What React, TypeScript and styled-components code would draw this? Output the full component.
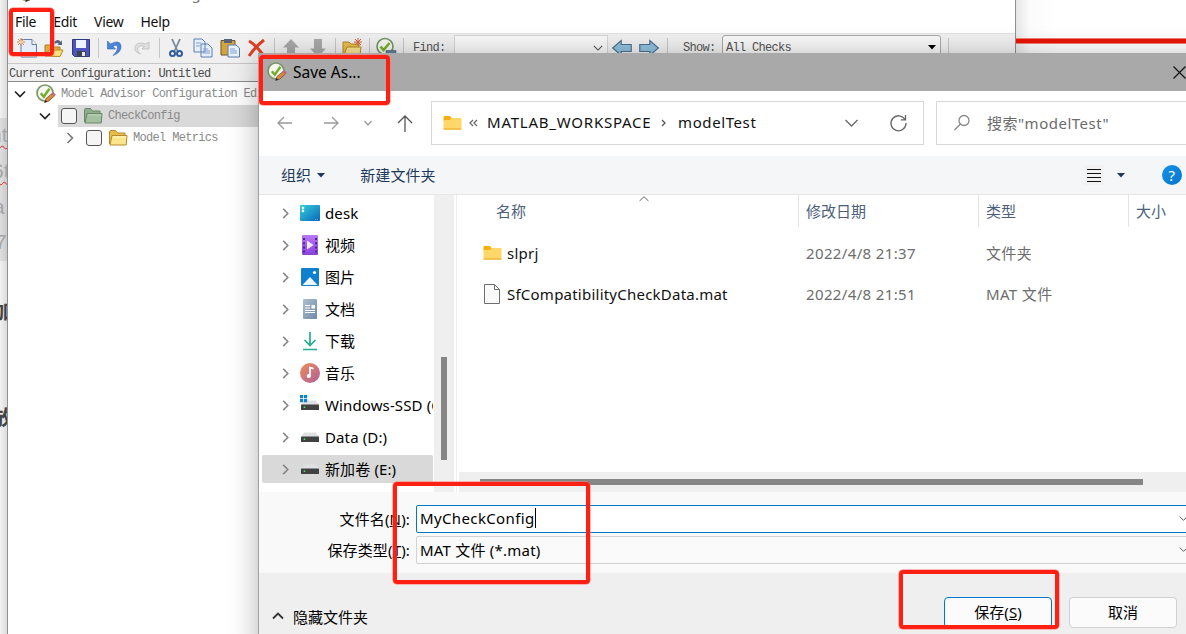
import React from 'react'
import { createGlobalStyle, styled } from 'styled-components'

const GlobalStyle = createGlobalStyle`
    * {
        box-sizing: border-box;
    }

    body {
        margin: 0;
        overflow: hidden;
        font-family: "Noto Sans", "Noto Sans CJK SC", sans-serif;
        font-size: 15px;
        color: #111;
    }
`

const Desktop = styled.div`
    position: relative;
    width: 1186px;
    height: 634px;
    overflow: hidden;
    background: #fff;
`

/**
 * Page behind the windows
 */

const BackPage = styled.div`
    position: absolute;
    left: 0;
    top: 0;
    width: 7px;
    height: 634px;
    overflow: hidden;
    background: linear-gradient(90deg, #f1f1f1, #dcdcdc);
`

const BackCode = styled.div`
    position: absolute;
    top: 118px;
    left: 0;
    width: 7px;
    height: 143px;
    background: linear-gradient(90deg, #dedede, #cbcbcb);
`

const BackText = styled.span<{ $top: number; $left: number; $bold?: boolean; $wavy?: boolean }>`
    position: absolute;
    top: ${props => props.$top}px;
    left: ${props => props.$left}px;
    line-height: 24px;
    white-space: nowrap;
    font-size: ${props => (props.$bold ? 20 : 21)}px;
    font-weight: ${props => (props.$bold ? 700 : 400)};
    font-family: "Liberation Sans", "Noto Sans CJK SC", sans-serif;
    color: ${props => (props.$bold ? '#444' : '#a5a5a8')};
    text-decoration: ${props => (props.$wavy ? 'underline wavy #e02020 1px' : 'none')};
    text-underline-offset: 3px;
`

const RightPage = styled.div`
    position: absolute;
    left: 1016px;
    top: 0;
    width: 170px;
    height: 60px;
    background: linear-gradient(90deg, #e6e6e6, #fbfbfb 14px, #fff 40px);
`

const RedRule = styled.div`
    margin-top: 38px;
    height: 6px;
    border: solid #f08072;
    border-width: 1px 0;
    background: #e81400;
`

/**
 * Configuration editor window
 */

const EditorWindow = styled.div`
    position: absolute;
    left: 7px;
    top: -18px;
    width: 1009px;
    height: 670px;
    display: flex;
    flex-direction: column;
    background: #fff;
    border: solid #8f9093;
    border-width: 0 1px;
`

const EditorTitle = styled.div`
    display: flex;
    align-items: center;
    gap: 8px;
    height: 29px;
    padding: 0 0 7px 9px;
    color: #777;
    line-height: 22px;
    letter-spacing: 0.25px;
`

const MenuBar = styled.div`
    display: flex;
    gap: 17px;
    height: 22px;
    padding-left: 7px;
    line-height: 22px;
    font-size: 14px;
    letter-spacing: -0.3px;
`

const Toolbar = styled.div`
    display: flex;
    align-items: center;
    gap: 7px;
    height: 30px;
    padding: 0 0 2px 9px;
    background: #f0f0f0;
    border-top: 1px solid #e2e2e2;
    font-family: "Liberation Mono", monospace;
    font-size: 12px;
    letter-spacing: -0.7px;
    color: #555;
`

const ToolIcon = styled.svg`
    flex: none;
    width: 20px;
    height: 20px;
    overflow: visible;
`

const ToolDivider = styled.div`
    width: 1px;
    height: 20px;
    margin: 0 -0.5px;
    background: #c6c6c6;
`

const ToolField = styled.div<{ $width: number; $round?: boolean }>`
    display: flex;
    align-items: center;
    justify-content: space-between;
    width: ${props => props.$width}px;
    height: 25px;
    padding: 0 4px 0 3px;
    border: 1px solid ${props => (props.$round ? '#aaa' : '#d5d5d5')};
    border-radius: ${props => (props.$round ? 3 : 0)}px;
    background: #f8f8f8;
`

const ToolLabel = styled.span<{ $width: number; $left?: number }>`
    width: ${props => props.$width}px;
    margin-left: ${props => props.$left || 0}px;
`

const Arrows = styled.div`
    display: flex;
    gap: 7px;
    margin: 0 1px 0 -3px;
`

const ConfigLine = styled.div`
    height: 19px;
    padding-left: 1px;
    line-height: 20px;
    background: #f0f0f0;
    border-top: 1px solid #c8c8c8;
    border-bottom: 1px solid #8c8c8c;
    font-family: "Liberation Mono", monospace;
    font-size: 12px;
    letter-spacing: -0.7px;
    color: #4a4a4a;
`

const ConfigTree = styled.div`
    display: flex;
    flex-direction: column;
    padding-top: 1px;
    font-family: "Liberation Mono", monospace;
    font-size: 12px;
    letter-spacing: -0.68px;
    color: #8a8a8a;
    white-space: nowrap;
`

const ConfigRow = styled.div<{ $depth: number }>`
    display: flex;
    align-items: center;
    height: 22px;
    padding-left: ${props => 6 + props.$depth * 25}px;
`

const ConfigItem = styled.div<{ $selected?: boolean }>`
    display: flex;
    align-items: center;
    gap: 5px;
    flex: 1;
    height: 22px;
    margin-left: 7px;
    padding-left: 3px;
    background: ${props => (props.$selected ? '#d9d9d9' : 'none')};
`

const CheckBox = styled.div`
    width: 16px;
    height: 16px;
    margin-right: 1px;
    border: 1px solid #555;
    border-radius: 3px;
    background: #f5f5f5;
`

/**
 * Save dialog
 */

const Dialog = styled.div`
    position: absolute;
    left: 259px;
    top: 53px;
    width: 960px;
    height: 600px;
    display: flex;
    flex-direction: column;
    background: #fff;
    box-shadow: -1px 0 0 #a2a2a2, 0 5px 28px rgba(0, 0, 0, 0.32);
`

const DialogTitle = styled.div`
    display: flex;
    align-items: center;
    flex: none;
    gap: 6px;
    height: 38px;
    padding: 0 33px 0 8px;
    background: #a9a9a9;
    color: #000;
    font-size: 15.5px;

    & > :last-child {
        margin-left: auto;
    }
`

const NavBar = styled.div`
    display: flex;
    align-items: center;
    flex: none;
    height: 65px;
    padding: 0 0 1px 18px;
`

const NavGlyph = styled.svg<{ $gap?: number }>`
    flex: none;
    margin-right: ${props => props.$gap || 0}px;
    overflow: visible;
    fill: none;
    stroke: #999;
    stroke-width: 1.3;
`

const AddressBox = styled.div`
    display: flex;
    align-items: center;
    width: 493px;
    height: 44px;
    padding: 0 0 1px 11px;
    border: 1px solid #d8d8d8;
`

const Crumb = styled.span<{ $width: number; $spacing: number }>`
    width: ${props => props.$width}px;
    padding-bottom: 2px;
    white-space: nowrap;
    letter-spacing: ${props => props.$spacing}px;
`

const SearchBox = styled.div`
    display: flex;
    align-items: center;
    gap: 17px;
    width: 270px;
    height: 44px;
    margin-left: 12px;
    padding: 0 0 1px 17px;
    border: 1px solid #d8d8d8;
    color: #6c6c6c;
    letter-spacing: 0.5px;
`

const CommandBar = styled.div`
    display: flex;
    align-items: center;
    flex: none;
    height: 39px;
    padding-left: 22px;
    background: #f4f6f8;
    border-bottom: 1px solid #e6e6e6;
    color: #1e395b;
`

const CommandButton = styled.div<{ $gap: number }>`
    display: flex;
    align-items: center;
    gap: 6px;
    margin-right: ${props => props.$gap}px;
    line-height: 22px;
    letter-spacing: 0.1px;
`

const ViewButton = styled.div`
    display: grid;
    place-items: center;
    width: 20px;
    height: 20px;
    margin-right: 13px;
    background: #f2f2f2;
`

const HelpBadge = styled.div`
    display: grid;
    place-items: center;
    width: 20px;
    height: 20px;
    margin-left: 37px;
    border-radius: 50%;
    background: linear-gradient(135deg, #1792e5, #0575cf);
    color: #fff;
    font-size: 15px;
    line-height: 20px;
`

const Browser = styled.div`
    display: flex;
    flex: none;
    height: 297px;
`

const PlaceList = styled.div`
    display: flex;
    flex-direction: column;
    gap: 4px;
    width: 175px;
    padding: 4px 1px 0 3px;
    overflow: hidden;
`

const PlaceRow = styled.div<{ $selected?: boolean }>`
    display: flex;
    align-items: center;
    flex: none;
    height: 28px;
    padding-left: 18px;
    overflow: hidden;
    white-space: nowrap;
    border-radius: 2px;
    background: ${props => (props.$selected ? '#d9d9d9' : 'none')};
    color: #000;
    font-size: 15px;
    letter-spacing: 0.12px;
`

const PlaceName = styled.span`
    padding-bottom: 1px;
    line-height: 26px;
`

const PlaceIcon = styled.svg`
    flex: none;
    width: 20px;
    height: 20px;
    margin: 0 5px 0 9px;
`

const VerticalTrack = styled.div`
    width: 20px;
    padding: 162px 0 0 7px;
    background: #efefef;
`

const VerticalThumb = styled.div`
    width: 6px;
    height: 103px;
    background: #868686;
`

const FilePane = styled.div`
    display: flex;
    flex-direction: column;
    flex: 1;
    margin-left: 2px;
    border-left: 1px solid #eee;
`

const HeaderRow = styled.div`
    display: grid;
    position: relative;
    grid-template-columns: 342px 180px 150px 1fr;
    height: 32px;
    color: #4c607a;
`

const HeaderCell = styled.div<{ $pad?: number }>`
    padding-left: ${props => props.$pad || 7}px;
    line-height: 32px;
    border-right: 1px solid #e3e3e3;
`

const SortMark = styled.svg`
    position: absolute;
    left: 182px;
    top: 1px;
    fill: none;
    stroke: #666;
`

const FileRow = styled.div`
    display: grid;
    grid-template-columns: 342px 180px 150px 1fr;
    align-items: center;
    height: 41px;
    color: #6d6d6d;
    white-space: nowrap;
    letter-spacing: 0.36px;

    & > span {
        padding-left: 7px;
    }
`

const FileName = styled.div`
    display: flex;
    align-items: center;
    gap: 5px;
    padding-left: 26px;
    color: #111;
    letter-spacing: 0.23px;
`

const FileRows = styled.div`
    flex: 1;
    padding-top: 5px;
`

const HorizontalTrack = styled.div`
    height: 20px;
    margin-left: 2px;
    padding: 7px 0 0 21px;
    background: #efefef;
`

const HorizontalThumb = styled.div`
    width: 663px;
    height: 6px;
    background: #868686;
`

const FormArea = styled.div`
    display: flex;
    flex-direction: column;
    flex: none;
    gap: 3px;
    height: 81px;
    padding-top: 13px;
    background: #f9f9f9;
`

const FormRow = styled.div`
    display: flex;
    align-items: center;
    gap: 6px;
    height: 28px;
    color: #000;
`

const FormLabel = styled.label`
    width: 151px;
    padding-bottom: 1px;
    text-align: right;
    white-space: nowrap;
    letter-spacing: 0.15px;
`

const FormField = styled.div<{ $active?: boolean }>`
    display: flex;
    align-items: center;
    width: 776px;
    height: 28px;
    padding: 0 0 2px 3px;
    border: 1px solid ${props => (props.$active ? '#0078c8' : '#d2d2d2')};
    border-radius: 2px;
    background: ${props => (props.$active ? '#fff' : '#fafafa')};
    letter-spacing: ${props => (props.$active ? 0.37 : 0.22)}px;

    & > svg {
        margin-left: auto;
        margin-right: 3px;
    }
`

const Caret = styled.i`
    width: 1px;
    height: 20px;
    background: #000;
`

const Footer = styled.div`
    display: flex;
    flex: 1;
    padding: 24px 42px 0 13px;
    background: #efefef;
    color: #000;
`

const HideFolders = styled.div`
    display: flex;
    align-items: center;
    gap: 9px;
    height: 38px;
    margin-right: auto;
`

const DialogButton = styled.div<{ $primary?: boolean }>`
    width: 108px;
    height: 31px;
    margin-left: ${props => (props.$primary ? 0 : 17)}px;
    line-height: 28px;
    text-align: center;
    border: 1px solid ${props => (props.$primary ? '#0078c8' : '#d0d0d0')};
    border-radius: 4px;
    background: #fbfbfb;
`

const Highlight = styled.div<{ $x: number; $y: number; $w: number; $h: number }>`
    position: absolute;
    left: ${props => props.$x}px;
    top: ${props => props.$y}px;
    width: ${props => props.$w}px;
    height: ${props => props.$h}px;
    border: 4px solid #ff2014;
    border-radius: 4px;
    box-shadow: 0 0 0 0.5px #ff7a72;
`

const AdvisorIcon = () => (
  <ToolIcon viewBox="0 0 20 20">
    <circle cx="9" cy="9" r="8" fill="#f4f8ee" stroke="#7d9468" strokeWidth="1.7" />
    <path d="M4.8 9.2l3 3.6 5.6-8" fill="none" stroke="#76ac2e" strokeWidth="2.4" />
    <path d="M8.5 18.5l1.5-4 6-5 2.5 2.5-6 5.2z" fill="#d98a42" stroke="#704b2c" strokeWidth=".7" />
    <path d="M16 9.5l1.5-1.2 2.4 2.4-1.4 1.4z" fill="#ce6182" />
    <path d="M8.5 18.5l1-2.5 1.8 1.7z" fill="#222" />
  </ToolIcon>
)

const OpenFolder = ({ green }: { green?: boolean }) => (
  <ToolIcon viewBox="0 0 20 20">
    <path d="M1.5 16V4q0-1.5 1.5-1.5h4.5L9.5 5H17v3" fill={green ? '#8fae87' : '#e8bd4c'} stroke={green ? '#68876b' : '#b88a28'} />
    <path d="M2 17L4 7.5h15L18.2 17z" fill={green ? '#a3c1a0' : '#fbe48d'} stroke={green ? '#68876b' : '#b88a28'} />
    <path d="M5 9h13" stroke={green ? '#c2d8bd' : '#fff7c8'} />
  </ToolIcon>
)

const YellowFolder = () => (
  <svg width="19" height="16" viewBox="0 0 19 16">
    <path d="M.5 2q0-1 1-1H7l1.5 2v3h-8z" fill="#f7ae13" />
    <path d="M.5 5H7l1.7-2H18q.5 0 .5.5V14q0 .7-.7.7H1.2q-.7 0-.7-.7z" fill="#ffd768" />
    <path d="M.5 14h18" stroke="#e9a824" />
  </svg>
)

const CHEVRONS: Record<string, string> = {
  down: 'M1 3.5l5 5 5-5',
  up: 'M1 8.5l5-5 5 5',
  right: 'M3.5 1l5 5-5 5',
}

interface ChevronProps {
  dir?: string
  size?: number
  color?: string
  weight?: number
}
const Chevron = ({ dir = 'down', size = 12, color = '#555', weight = 1.3 }: ChevronProps) => (
  <NavGlyph width={size} height={size} viewBox="0 0 12 12">
    <path d={CHEVRONS[dir]} stroke={color} strokeWidth={weight} />
  </NavGlyph>
)

const ArrowBlock = ({ turn }: { turn: number }) => (
  <ToolIcon viewBox="0 0 20 20">
    <path transform={`rotate(${turn} 10 10)`} d="M10 1l8 8.5h-4V19H6V9.5H2z" fill="#a9a9a9" />
  </ToolIcon>
)

const BlueArrow = ({ flip }: { flip?: boolean }) => (
  <ToolIcon viewBox="0 0 20 20">
    <path
      transform={flip ? 'translate(20 0) scale(-1 1)' : undefined}
      d="M.7 10L9.2 2.500v4h10v7h-10v4z"
      fill="#8fc1dd"
      stroke="#4e718e"
      strokeWidth="1.2"
    />
  </ToolIcon>
)

const Drive = ({ system }: { system?: boolean }) => (
  <PlaceIcon viewBox="0 0 20 20">
    <path d="M4 5.500h12l3 4.500H1z" fill="#dfe1e4" />
    <rect x="1" y="9.500" width="18" height="5.500" rx=".6" fill="#414141" />
    <circle cx="4.500" cy="12.200" r=".9" fill="#3be060" />
    {system && <path d="M0 0h3.200v3.200H0zM4 0h3.200v3.200H4zM0 4h3.200v3.200H0zM4 4h3.200v3.200H4z" fill="#0f83cf" />}
  </PlaceIcon>
)

const DeskIcon = () => (
  <PlaceIcon viewBox="0 0 20 20">
    <defs>
      <linearGradient id="desk" x1="0" y1="0" x2="1" y2="1">
        <stop stopColor="#36cfdd" />
        <stop offset="1" stopColor="#0967b9" />
      </linearGradient>
    </defs>
    <rect y="2" width="20" height="16" rx="1" fill="url(#desk)" />
    <path d="M2 4h2v2H2zM2 7h2v2H2zM15 16.5h1M17 16.5h1" fill="#fff" stroke="#d9f8ff" strokeWidth=".4" />
  </PlaceIcon>
)

const VideoIcon = () => (
  <PlaceIcon viewBox="0 0 20 20">
    <defs>
      <linearGradient id="video" x1="0" y1="0" x2="0" y2="1">
        <stop stopColor="#b778f2" />
        <stop offset="1" stopColor="#8a41dd" />
      </linearGradient>
    </defs>
    <rect x="2" y="0" width="16" height="20" rx="1" fill="url(#video)" />
    <path d="M4 3v15M16 3v15" stroke="#53228c" strokeWidth="2" strokeDasharray="2 2.200" />
    <path d="M7 5.500v9l6.500-4.500z" fill="#f4eaff" />
  </PlaceIcon>
)

const PictureIcon = () => (
  <PlaceIcon viewBox="0 0 20 20">
    <rect x="1" y="1" width="18" height="18" rx="1" fill="#0f80cf" />
    <path d="M2.500 18l7.500-8 7.500 8z" fill="#f0f8ff" />
    <circle cx="14.500" cy="5.500" r="1.600" fill="#fff" />
  </PlaceIcon>
)

const DocumentIcon = () => (
  <PlaceIcon viewBox="0 0 20 20">
    <defs>
      <linearGradient id="document" x1="0" y1="0" x2="1" y2="1">
        <stop stopColor="#adc0d2" />
        <stop offset="1" stopColor="#7089a4" />
      </linearGradient>
    </defs>
    <rect x="3" width="14" height="20" rx="1" fill="url(#document)" />
    <path d="M5 6.500h5M5 9h5M5 11.500h10M5 13.500h10" stroke="#fff" strokeWidth="1.200" />
    <rect x="11.500" y="6" width="3.500" height="3.500" fill="#fff" />
  </PlaceIcon>
)

const DownloadIcon = () => (
  <PlaceIcon viewBox="0 0 20 20">
    <path d="M10 1v13M4.500 9l5.500 5.500L15.500 9M3 18.500h14" fill="none" stroke="#1fae93" strokeWidth="1.700" />
  </PlaceIcon>
)

const MusicIcon = () => (
  <PlaceIcon viewBox="0 0 20 20">
    <defs>
      <linearGradient id="music" x1="0" y1="0" x2="1" y2="1">
        <stop stopColor="#ee8e55" />
        <stop offset="1" stopColor="#b15d9f" />
      </linearGradient>
    </defs>
    <circle cx="10" cy="10" r="10" fill="url(#music)" />
    <path d="M10 13V4.700l3.500 1" fill="none" stroke="#fff" strokeWidth="1.800" />
    <circle cx="8.800" cy="13" r="2.100" fill="#fff" />
  </PlaceIcon>
)

const PLACES = [
  { name: 'desk', icon: <DeskIcon /> },
  { name: '视频', icon: <VideoIcon /> },
  { name: '图片', icon: <PictureIcon /> },
  { name: '文档', icon: <DocumentIcon /> },
  { name: '下载', icon: <DownloadIcon /> },
  { name: '音乐', icon: <MusicIcon /> },
  { name: 'Windows-SSD (C:)', icon: <Drive system /> },
  { name: 'Data (D:)', icon: <Drive /> },
  { name: '新加卷 (E:)', icon: <Drive />, selected: true },
]

const EditorToolbar = () => (
  <Toolbar>
    <ToolIcon viewBox="0 0 20 20">
      <path d="M4 1.500h11l4.500 5V19H4z" fill="#e5edfa" stroke="#627da8" />
      <path d="M15 1.500v5h4.500" fill="#fff" stroke="#627da8" />
      <path d="M4 0v8M0 4h8M1 1l6 6M7 1L1 7" stroke="#d88450" />
      <circle cx="4" cy="4" r="1.700" fill="#fbd6a5" />
    </ToolIcon>
    <ToolIcon viewBox="0 0 20 20">
      <path d="M1 18V7h6l1 2h8v9z" fill="#dcad3c" stroke="#ac8023" />
      <path d="M1 18l4-6h14l-3 6.500z" fill="#fce17c" stroke="#b58828" />
      <path d="M10 4q4-4 7 0l1-2v5h-5l2-1q-2-2-4 0" fill="#526481" />
    </ToolIcon>
    <ToolIcon viewBox="0 0 20 20">
      <path d="M1.500 1.500h17v17h-15l-2-2z" fill="#4d55bd" stroke="#30377e" />
      <path d="M5 2h10v8H5z" fill="#edf2ff" />
      <path d="M6 13h9v5.500H6z" fill="#3e4350" />
      <path d="M11 14h3v4h-3z" fill="#e5e7ee" />
    </ToolIcon>
    <ToolDivider />
    <ToolIcon viewBox="0 0 20 20">
      <path d="M2.500 3v8h8L8 8.500q4.500-3 4.500 1.200 0 3.800-4.500 7.800 8.500-3 8-9.500Q15 1 5.500 6z" fill="#4d83d8" stroke="#3265b4" strokeWidth=".6" />
    </ToolIcon>
    <ToolIcon viewBox="0 0 20 20">
      <path d="M17 4v7h-7l2.500-2.500Q6 6.500 5.500 11q0 3 3 5Q2 14 3 9q2-6 11-3z" fill="#e1e1e1" stroke="#bbb" strokeWidth=".8" />
    </ToolIcon>
    <ToolDivider />
    <ToolIcon viewBox="0 0 20 20">
      <path d="M6 1l5.500 12M14 1L8.500 13" stroke="#7b8a9b" strokeWidth="1.800" />
      <circle cx="6.500" cy="15.500" r="2.500" fill="none" stroke="#315b9c" strokeWidth="2" />
      <circle cx="13.500" cy="15.500" r="2.500" fill="none" stroke="#315b9c" strokeWidth="2" />
    </ToolIcon>
    <ToolIcon viewBox="0 0 20 20">
      <path d="M1 1h8l3 3v10H1zM8 6h7l4 4v9H8z" fill="#e5efff" stroke="#607fb1" />
      <path d="M3 5h5M3 8h4M10 11h5M10 13h7M10 15h7" stroke="#83a0cc" />
    </ToolIcon>
    <ToolIcon viewBox="0 0 20 20">
      <path d="M1 2.500h14V17H1z" fill="#d5a53d" stroke="#6c5530" />
      <path d="M4 1h8v4H4z" fill="#566376" />
      <path d="M8 7h8l3.500 3v9H8z" fill="#e8f1ff" stroke="#5c7baa" />
      <path d="M10 11h5M10 13h7M10 15h7" stroke="#83a0cc" />
    </ToolIcon>
    <ToolIcon viewBox="0 0 20 20">
      <path d="M2 3q7 4 15 15M17 2Q9 8 2 18" fill="none" stroke="#dd4125" strokeWidth="3" />
    </ToolIcon>
    <ToolDivider />
    <ArrowBlock turn={0} />
    <ArrowBlock turn={180} />
    <ToolDivider />
    <ToolIcon viewBox="0 0 20 20">
      <path d="M1 17V4h6l2 2h8v11z" fill="#e8bd4c" stroke="#b88a28" />
      <path d="M2 17l3-8h14l-1 8z" fill="#fbe48d" stroke="#b88a28" />
      <path d="M16 0v8M12 4h8M13 1l6 6M19 1l-6 6" stroke="#d56138" />
    </ToolIcon>
    <ToolDivider />
    <ToolIcon viewBox="0 0 20 20">
      <circle cx="9" cy="8.500" r="8" fill="#f4f8ee" stroke="#759368" strokeWidth="1.600" />
      <path d="M4.500 8.500l3 3.500 6-7" fill="none" stroke="#76ac2e" strokeWidth="2.500" />
      <path d="M10 12.500h10v3H10z" fill="#60809e" stroke="#3e5c7c" strokeWidth=".6" />
    </ToolIcon>
    <ToolDivider />
    <ToolLabel $width={34} $left={3}>Find:</ToolLabel>
    <ToolField $width={154}>
      <span />
      <Chevron size={10} />
    </ToolField>
    <Arrows>
      <BlueArrow />
      <BlueArrow flip />
    </Arrows>
    <ToolDivider />
    <ToolLabel $width={32} $left={9}>Show:</ToolLabel>
    <ToolField $width={219} $round>
      All Checks
      <svg width="8" height="5" viewBox="0 0 8 5"><path d="M0 0h8L4 4.500z" /></svg>
    </ToolField>
    <ToolDivider />
  </Toolbar>
)

const SaveDialog = () => (
  <Dialog>
    <DialogTitle>
      <AdvisorIcon />
      Save As...
      <svg width="13" height="13" viewBox="0 0 13 13"><path d="M.5.5l12 12M12.500.5l-12 12" stroke="#111" strokeWidth="1.200" /></svg>
    </DialogTitle>
    <NavBar>
      <NavGlyph width="16" height="14" $gap={30}><path d="M7 1L1 7l6 6M1 7h14" /></NavGlyph>
      <NavGlyph width="16" height="14" $gap={25}><path d="M9 1l6 6-6 6M15 7H1" /></NavGlyph>
      <NavGlyph width="8" height="6" $gap={25}><path d="M.5 1l3.500 4 3.500-4" /></NavGlyph>
      <NavGlyph width="16" height="17" $gap={18}><path d="M1 8l7-7 7 7M8 1v16" stroke="#555" /></NavGlyph>
      <AddressBox>
        <YellowFolder />
        <NavGlyph width="25" height="8"><path d="M11 1L8 4l3 3M15 1l-3 3 3 3" stroke="#666" /></NavGlyph>
        <Crumb $width={174} $spacing={0.77}>MATLAB_WORKSPACE</Crumb>
        <NavGlyph width="6" height="8" $gap={11}><path d="M1 1l3 3-3 3" stroke="#555" /></NavGlyph>
        <Crumb $width={167} $spacing={0.6}>modelTest</Crumb>
        <NavGlyph width="13" height="8" $gap={32}><path d="M.5 1l6 6 6-6" stroke="#666" /></NavGlyph>
        <NavGlyph width="17" height="17" viewBox="0 0 17 17"><path d="M15 5.500A7.500 7.500 0 1 0 16 9M15.500 1v4.800h-4.800" stroke="#666" /></NavGlyph>
      </AddressBox>
      <SearchBox>
        <NavGlyph width="16" height="16"><path d="M15 5.500a5 5 0 1 1-10 0a5 5 0 1 1 10 0zM6.500 9L.5 15" stroke="#888" /></NavGlyph>
        搜索"modelTest"
      </SearchBox>
    </NavBar>
    <CommandBar>
      <CommandButton $gap={35}>
        组织
        <svg width="8" height="5" viewBox="0 0 8 5"><path d="M0 0h8L4 4.500z" fill="#1e395b" /></svg>
      </CommandButton>
      <CommandButton $gap={648}>新建文件夹</CommandButton>
      <ViewButton>
        <svg width="14" height="14"><path d="M0 1.500h14M0 5.500h14M0 9.500h14M0 13.500h14" stroke="#111" /></svg>
      </ViewButton>
      <svg width="8" height="5" viewBox="0 0 8 5"><path d="M0 0h8L4 4.500z" fill="#1e395b" /></svg>
      <HelpBadge>?</HelpBadge>
    </CommandBar>
    <Browser>
      <PlaceList>
        {PLACES.map(place => (
          <PlaceRow key={place.name} $selected={place.selected}>
            <Chevron dir="right" size={11} color="#858585" weight={1.7} />
            {place.icon}
            <PlaceName>{place.name}</PlaceName>
          </PlaceRow>
        ))}
      </PlaceList>
      <VerticalTrack><VerticalThumb /></VerticalTrack>
      <FilePane>
        <HeaderRow>
          <HeaderCell $pad={39}>名称</HeaderCell>
          <HeaderCell>修改日期</HeaderCell>
          <HeaderCell>类型</HeaderCell>
          <HeaderCell>大小</HeaderCell>
          <SortMark width="10" height="6"><path d="M.5 5L5 .7 9.500 5" /></SortMark>
        </HeaderRow>
        <FileRows>
          <FileRow>
            <FileName><YellowFolder />slprj</FileName>
            <span>2022/4/8 21:37</span>
            <span>文件夹</span>
          </FileRow>
          <FileRow>
            <FileName>
              <svg width="19" height="20" viewBox="0 0 19 20">
                <path d="M1.500.5h10l5 5v14h-15z" fill="#fafafa" stroke="#6e6e6e" />
                <path d="M11.500.5v5h5" fill="none" stroke="#6e6e6e" />
              </svg>
              SfCompatibilityCheckData.mat
            </FileName>
            <span>2022/4/8 21:51</span>
            <span>MAT 文件</span>
          </FileRow>
        </FileRows>
        <HorizontalTrack><HorizontalThumb /></HorizontalTrack>
      </FilePane>
    </Browser>
    <FormArea>
      <FormRow>
        <FormLabel>文件名(<u>N</u>):</FormLabel>
        <FormField $active>MyCheckConfig<Caret /><Chevron size={9} /></FormField>
      </FormRow>
      <FormRow>
        <FormLabel>保存类型(<u>T</u>):</FormLabel>
        <FormField>MAT 文件 (*.mat)<Chevron size={9} /></FormField>
      </FormRow>
    </FormArea>
    <Footer>
      <HideFolders><Chevron dir="up" color="#333" weight={1.8} />隐藏文件夹</HideFolders>
      <DialogButton $primary>保存(<u>S</u>)</DialogButton>
      <DialogButton>取消</DialogButton>
    </Footer>
  </Dialog>
)

export default function App() {
  return (
    <Desktop>
      <GlobalStyle />
      <BackPage>
        <BackCode />
        <BackText $top={123} $left={-10} $wavy>nt</BackText>
        <BackText $top={159} $left={-8} $wavy>6t</BackText>
        <BackText $top={195} $left={-7}>a</BackText>
        <BackText $top={230} $left={-5}>7</BackText>
        <BackText $top={300} $left={-7} $bold>加</BackText>
        <BackText $top={406} $left={-7} $bold>放</BackText>
      </BackPage>
      <RightPage><RedRule /></RightPage>
      <EditorWindow>
        <EditorTitle><AdvisorIcon />Model Advisor Configuration Editor</EditorTitle>
        <MenuBar>
          <span>File</span>
          <span>Edit</span>
          <span>View</span>
          <span>Help</span>
        </MenuBar>
        <EditorToolbar />
        <ConfigLine>Current Configuration: Untitled</ConfigLine>
        <ConfigTree>
          <ConfigRow $depth={0}>
            <Chevron color="#222" weight={1.7} />
            <ConfigItem><AdvisorIcon />Model Advisor Configuration Editor</ConfigItem>
          </ConfigRow>
          <ConfigRow $depth={1}>
            <Chevron color="#222" weight={1.7} />
            <ConfigItem $selected><CheckBox /><OpenFolder green />CheckConfig</ConfigItem>
          </ConfigRow>
          <ConfigRow $depth={2}>
            <Chevron dir="right" color="#777" weight={1.6} />
            <ConfigItem><CheckBox /><OpenFolder />Model Metrics</ConfigItem>
          </ConfigRow>
        </ConfigTree>
      </EditorWindow>
      <SaveDialog />
      <Highlight $x={9} $y={8} $w={45} $h={48} />
      <Highlight $x={259} $y={55} $w={131} $h={50} />
      <Highlight $x={393} $y={482} $w={197} $h={102} />
      <Highlight $x={899} $y={570} $w={160} $h={59} />
    </Desktop>
  )
}
